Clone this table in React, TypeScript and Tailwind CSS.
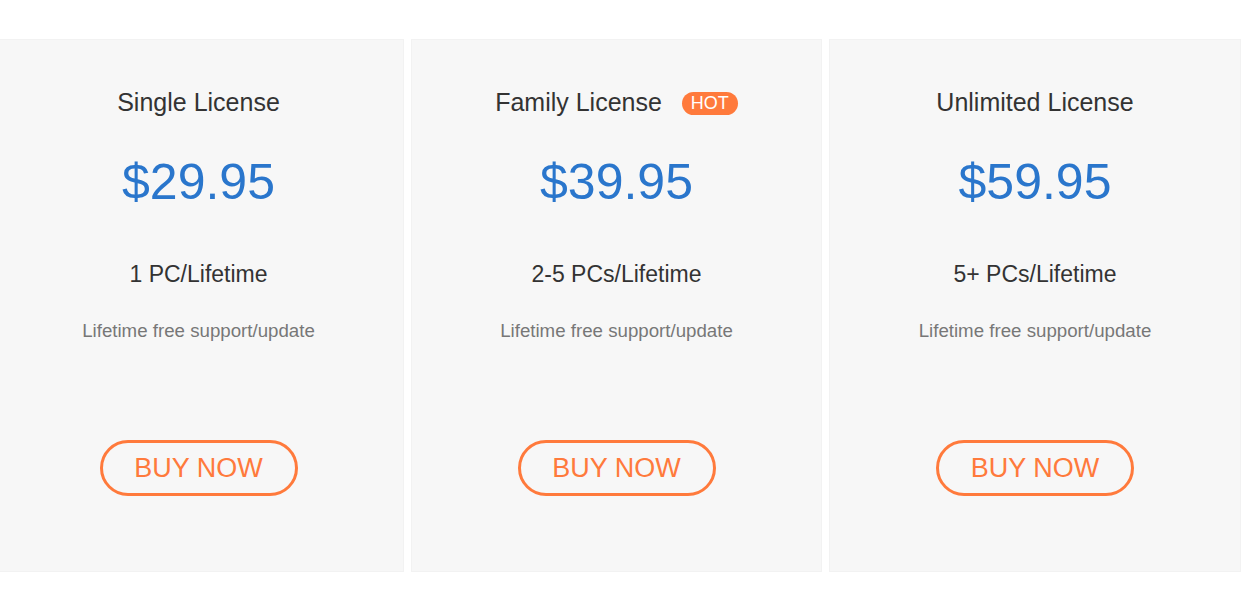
export default function App() {
  const plans = [
    { title: "Single License", price: "$29.95", pcs: "1 PC/Lifetime", hot: false, w: "w-[411px]" },
    { title: "Family License", price: "$39.95", pcs: "2-5 PCs/Lifetime", hot: true, w: "w-[411px]" },
    { title: "Unlimited License", price: "$59.95", pcs: "5+ PCs/Lifetime", hot: false, w: "w-[412px]" },
  ];
  return (
    <div className="w-[1259px] h-[607px] bg-white overflow-hidden" style={{ fontFamily: '"Liberation Sans", Arial, sans-serif' }}>
      <div className="flex gap-[7px] pt-[39px] -ml-[7px]">
        {plans.map((p) => (
          <div key={p.title} className={`${p.w} h-[533px] bg-[#f7f7f7] border border-[#f2f2f2] flex flex-col items-center`}>
            <div className="mt-[48px] h-[30px] flex items-center text-[25px] text-[#333]">
              <span>{p.title}</span>
              {p.hot && (
                <span className="ml-[20px] h-[23px] px-[9px] rounded-full bg-[#ff7a3c] text-white text-[18px] leading-[23px] flex items-center">HOT</span>
              )}
            </div>
            <div className="mt-[36px] text-[50px] leading-[56px] text-[#2a76cc]">{p.price}</div>
            <div className="mt-[49px] text-[23px] leading-[30px] text-[#333]">{p.pcs}</div>
            <div className="mt-[30px] text-[18.7px] leading-[24px] text-[#777]">Lifetime free support/update</div>
            <button className="mt-[97px] w-[198px] h-[56px] rounded-full border-[3px] border-[#ff7a3c] text-[#ff7a3c] text-[27px] flex items-center justify-center">BUY NOW</button>
          </div>
        ))}
      </div>
    </div>
  );
}
